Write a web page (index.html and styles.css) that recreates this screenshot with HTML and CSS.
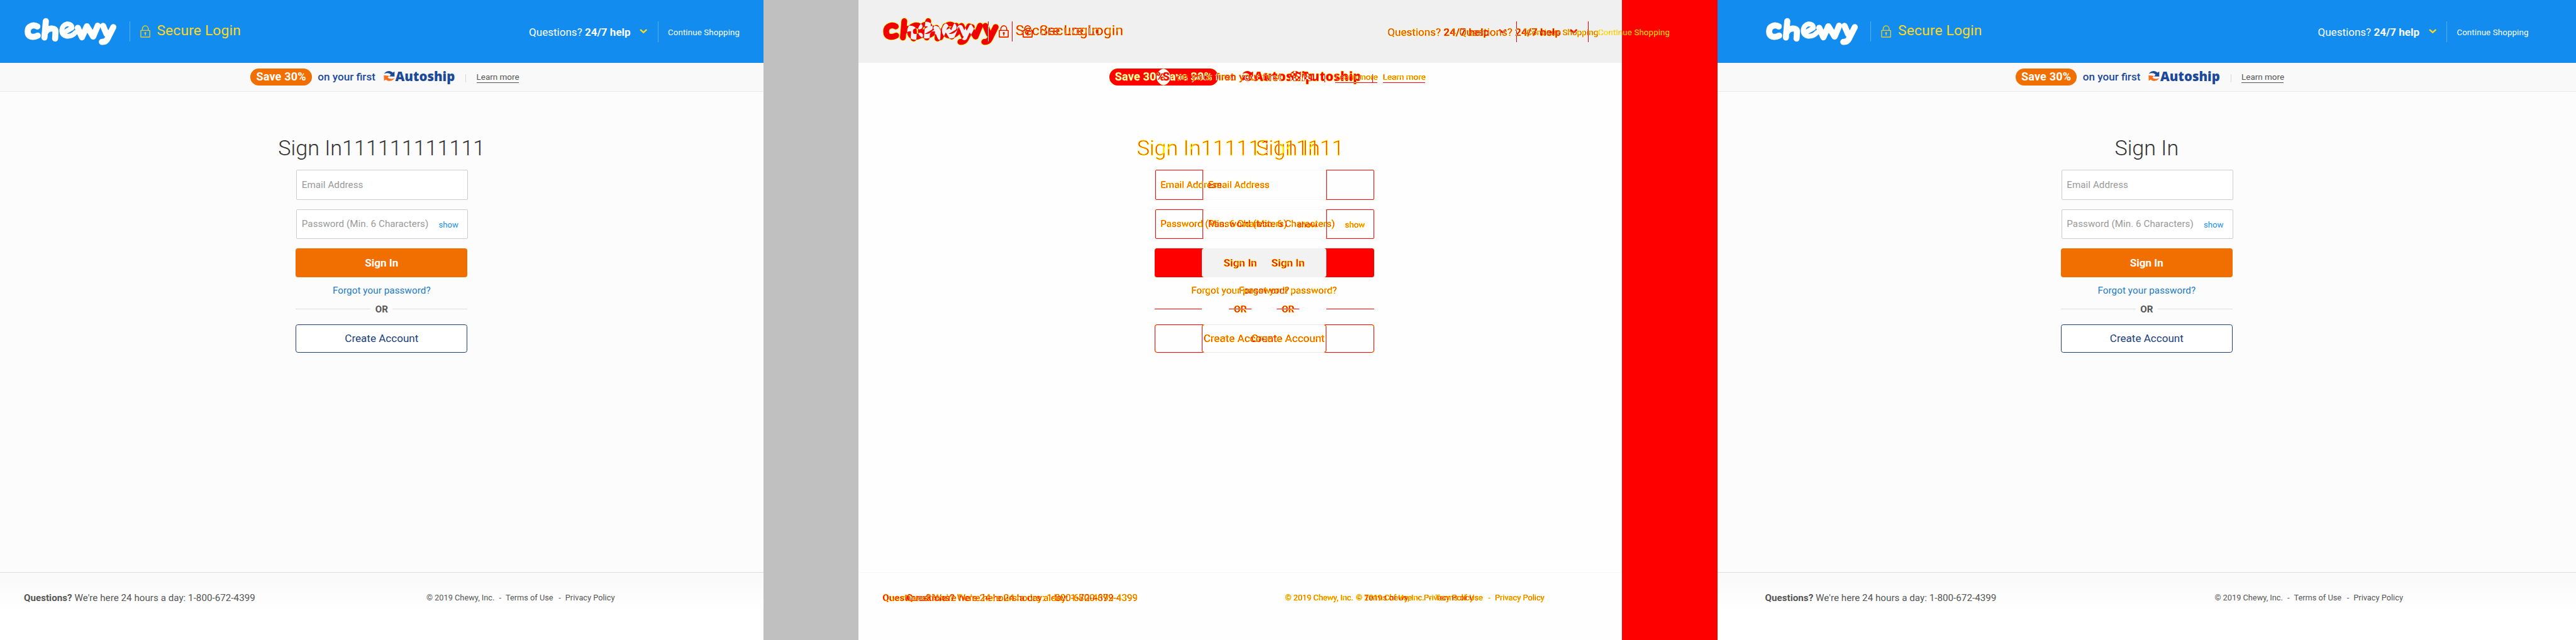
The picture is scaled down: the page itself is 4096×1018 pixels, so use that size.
FILE: index.html
```html
<!DOCTYPE html>
<html lang="en">
<head>
<meta charset="utf-8">
<title>Sign In</title>
<link rel="stylesheet" href="styles.css">
</head>
<body>
<svg class="defs" width="0" height="0" aria-hidden="true">
  <filter id="two-tone" x="0" y="0" width="100%" height="100%" color-interpolation-filters="sRGB">
    <feColorMatrix values="1 0 0 0 0  0 1 0 0 0  0 1 1 0 -1  0 0 0 1 0"/>
  </filter>
  <symbol id="logo" viewBox="28 28 469 142">
    <g fill="none" stroke-linecap="round" stroke-linejoin="round">
      <path d="M95 73C78 62 46 68 46 98C46 128 72 131 97 119"/>
      <path d="M138 46L131 129M135 104C146 78 188 76 187 99L185 134"/>
      <path class="thin" d="M230 104L271 80C268 50 222 54 219 92C217 128 262 132 288 104"/>
      <path d="M300 80L321 128L346 72L378 124L401 69"/>
      <path d="M428 70L446 112M480 76L450 136C443 150 434 152 422 151"/>
    </g>
  </symbol>
  <symbol id="lock" viewBox="0 0 17 21">
    <rect x="1" y="8.8" width="15" height="11.2" rx=".5" fill="none" stroke="currentColor" stroke-width="1.5"/>
    <path d="M3.6 8.8V6a4.9 4.9 0 0 1 9.8 0v2.8M8.5 13.5v4" fill="none" stroke="currentColor" stroke-width="1.5"/>
    <circle cx="8.5" cy="13.3" r="1.6" fill="currentColor"/>
  </symbol>
  <symbol id="arrows" viewBox="69 28 56 50">
    <path class="arrow-a" d="M71 42C82 25 104 24 114 36L123 30V55L97 54L105 46C96 36 84 36 71 42Z"/>
    <path class="arrow-b" d="M123 63C112 80 90 81 81 70L71 76L70 49L97 52L89 60C98 69 110 68 123 63Z"/>
  </symbol>
  <symbol id="chevron" viewBox="0 0 13 8">
    <path d="M1.8 1.8L6.5 6L11.2 1.8" fill="none" stroke="currentColor" stroke-width="2.6" stroke-linecap="round"/>
  </symbol>
</svg>
<div class="board">
  <section class="panel narrow">
    <header class="top">
      <svg class="logo"><use href="#logo"/></svg><i class="rule"></i>
      <svg class="lock"><use href="#lock"/></svg><span class="secure">Secure Login</span>
      <div class="help"><span class="ask">Questions? <b>24/7 help</b></span><svg class="chevron"><use href="#chevron"/></svg><i class="rule"></i><span class="shop">Continue Shopping</span></div>
    </header>
    <div class="promo">
      <b class="pill">Save 30%</b><span class="first">on your first</span><svg class="arrows"><use href="#arrows"/></svg><b class="auto">Autoship</b><i class="tick"></i><span class="learn">Learn more</span>
    </div>
    <main class="main">
      <h1>Sign In111111111111</h1>
      <form class="form">
        <div class="field"><span class="hint">Email Address</span></div>
        <div class="field"><span class="hint">Password (Min. 6 Characters)</span><span class="show">show</span></div>
        <div class="signin"><span>Sign In</span></div>
        <a class="forgot">Forgot your password?</a>
        <div class="or"><span>OR</span></div>
        <div class="create"><span>Create Account</span></div>
      </form>
    </main>
    <footer class="foot">
      <span class="call"><b>Questions?</b> We're here 24 hours a day: 1-800-672-4399</span>
      <div class="legal"><span class="copy">© 2019 Chewy, Inc.</span><span class="dash">-</span><span class="terms">Terms of Use</span><span class="dash">-</span><span class="privacy">Privacy Policy</span></div>
    </footer>
  </section>
  <div class="gap"></div>
  <section class="compare">
    <div class="layers">
      <div class="panel narrow mark">
        <div class="top">
          <svg class="logo"><use class="edge" href="#logo"/><use href="#logo"/></svg><i class="rule"></i>
          <svg class="lock"><use href="#lock"/></svg><span class="secure">Secure Login</span>
          <div class="help"><span class="ask">Questions? <b>24/7 help</b></span><svg class="chevron"><use href="#chevron"/></svg><i class="rule"></i><span class="shop">Continue Shopping</span></div>
        </div>
        <div class="promo">
          <b class="pill">Save 30%</b><span class="first">on your first</span><svg class="arrows"><use href="#arrows"/></svg><b class="auto">Autoship</b><i class="tick"></i><span class="learn">Learn more</span>
        </div>
        <div class="main">
          <h2>Sign In111111111111</h2>
          <div class="form">
            <div class="field"><span class="hint">Email Address</span></div>
            <div class="field"><span class="hint">Password (Min. 6 Characters)</span><span class="show">show</span></div>
            <div class="signin"><span>Sign In</span></div>
            <a class="forgot">Forgot your password?</a>
            <div class="or"><span>OR</span></div>
            <div class="create"><span>Create Account</span></div>
          </div>
        </div>
        <div class="foot">
          <span class="call"><b>Questions?</b> We're here 24 hours a day: 1-800-672-4399</span>
          <div class="legal"><span class="copy">© 2019 Chewy, Inc.</span><span class="dash">-</span><span class="terms">Terms of Use</span><span class="dash">-</span><span class="privacy">Privacy Policy</span></div>
        </div>
      </div>
      <div class="panel wide mark">
        <div class="top">
          <svg class="logo"><use class="edge" href="#logo"/><use href="#logo"/></svg><i class="rule"></i>
          <svg class="lock"><use href="#lock"/></svg><span class="secure">Secure Login</span>
          <div class="help"><span class="ask">Questions? <b>24/7 help</b></span><svg class="chevron"><use href="#chevron"/></svg><i class="rule"></i><span class="shop"></span></div>
        </div>
        <div class="promo">
          <b class="pill">Save 30%</b><span class="first">on your first</span><svg class="arrows"><use href="#arrows"/></svg><b class="auto">Autoship</b><i class="tick"></i><span class="learn">Learn more</span>
        </div>
        <div class="main">
          <h2>Sign In</h2>
          <div class="form">
            <div class="field"><span class="hint">Email Address</span></div>
            <div class="field"><span class="hint">Password (Min. 6 Characters)</span><span class="show">show</span></div>
            <div class="signin"><span>Sign In</span></div>
            <a class="forgot">Forgot your password?</a>
            <div class="or"><span>OR</span></div>
            <div class="create"><span>Create Account</span></div>
          </div>
        </div>
        <div class="foot">
          <span class="call"><b>Questions?</b> We're here 24 hours a day: 1-800-672-4399</span>
          <div class="legal"><span class="copy">© 2019 Chewy, Inc.</span><span class="dash">-</span><span class="terms">Terms of Use</span><span class="dash">-</span><span class="privacy">Privacy Policy</span></div>
        </div>
      </div>
    </div>
    <div class="shade">
      <div class="panel base">
        <div class="top"></div>
        <div class="promo"></div>
        <div class="main">
          <div class="form">
            <div class="field"></div>
            <div class="field"></div>
            <div class="signin"></div>
            <div class="forgot"></div>
            <div class="or"></div>
            <div class="create"></div>
          </div>
        </div>
        <div class="foot"></div>
      </div>
      <div class="excess"></div>
    </div>
    <div class="top over"><div class="help"><span class="shop">Continue Shopping</span></div></div>
  </section>
  <section class="panel wide">
    <header class="top">
      <svg class="logo"><use href="#logo"/></svg><i class="rule"></i>
      <svg class="lock"><use href="#lock"/></svg><span class="secure">Secure Login</span>
      <div class="help"><span class="ask">Questions? <b>24/7 help</b></span><svg class="chevron"><use href="#chevron"/></svg><i class="rule"></i><span class="shop">Continue Shopping</span></div>
    </header>
    <div class="promo">
      <b class="pill">Save 30%</b><span class="first">on your first</span><svg class="arrows"><use href="#arrows"/></svg><b class="auto">Autoship</b><i class="tick"></i><span class="learn">Learn more</span>
    </div>
    <main class="main">
      <h1>Sign In</h1>
      <form class="form">
        <div class="field"><span class="hint">Email Address</span></div>
        <div class="field"><span class="hint">Password (Min. 6 Characters)</span><span class="show">show</span></div>
        <div class="signin"><span>Sign In</span></div>
        <a class="forgot">Forgot your password?</a>
        <div class="or"><span>OR</span></div>
        <div class="create"><span>Create Account</span></div>
      </form>
    </main>
    <footer class="foot">
      <span class="call"><b>Questions?</b> We're here 24 hours a day: 1-800-672-4399</span>
      <div class="legal"><span class="copy">© 2019 Chewy, Inc.</span><span class="dash">-</span><span class="terms">Terms of Use</span><span class="dash">-</span><span class="privacy">Privacy Policy</span></div>
    </footer>
  </section>
</div>
</body>
</html>
```
FILE: styles.css
```css
/* 1rem is ten design pixels of a 4320px wide board */
html { font-size: 9.48148px; }
* { box-sizing: border-box; }
body { margin: 0; overflow: hidden; background: #c0c0c0; font-family: Roboto, "Liberation Sans", sans-serif; }
.defs { position: absolute; }
.board { display: flex; width: 432rem; height: 1018px; font-size: 1.6rem; white-space: nowrap; }
.board svg { display: block; flex: none; }
.board i, .board span, .board b { flex: none; }

.panel { display: flex; flex-direction: column; flex: none; height: 1018px; background: #fcfcfc; color: #555; }
.narrow { width: 128rem; --pad: 4rem; --call: 67.5rem; }
.wide { width: 144rem; --pad: 8rem; --call: 75.4rem; }
.gap { width: 16rem; flex: none; background: #c0c0c0; }

/* header */
.top { display: flex; align-items: center; height: 10.5rem; flex: none; padding: 0 var(--pad); background: #128cee; color: #fff; }
.logo { width: 15.6rem; height: 4.7rem; margin-top: .1rem; stroke: #fff; stroke-width: 31; --thin: 25; }
.thin { stroke-width: var(--thin); }
.top .rule { width: 1px; height: 3.4rem; margin: 0 1.7rem 0 2.1rem; background: #59aff3; }
.lock { width: 1.7rem; height: 2.1rem; margin-right: 1.1rem; color: #e3cc2c; }
.secure { font-size: 2.4rem; letter-spacing: .02rem; color: #ffd81c; line-height: 3rem; margin-top: -.1rem; }
.help { display: flex; align-items: center; margin-left: auto; height: 3.5rem; margin-top: .2rem; }
.ask { width: 17.3rem; font-size: 1.8rem; }
.chevron { width: 1.3rem; height: .8rem; margin-left: 1.3rem; margin-top: -.2rem; color: #ffd81c; }
.help .rule { height: 3.5rem; margin: 0 1.6rem 0 1.7rem; }
.shop { width: 12rem; font-size: 1.4rem; letter-spacing: .015rem; margin-top: .2rem; }

/* promotion strip */
.promo { display: flex; align-items: center; justify-content: center; height: 4.9rem; flex: none; padding-left: 1rem; background: #f9f9f9; border-bottom: 1px solid #e9e9e9; }
.pill { display: flex; justify-content: center; width: 10.3rem; height: 2.8rem; line-height: 2.8rem; border-radius: 1.4rem; background: #f16e00; color: #fff; font-size: 1.9rem; letter-spacing: .02rem; }
.first { width: 9.7rem; margin-left: 1rem; font-size: 1.8rem; font-weight: 500; color: #1c4a99; }
.arrows { width: 1.9rem; height: 1.7rem; margin: -.3rem .1rem 0 1.3rem; }
.arrow-a { fill: var(--arrow-a, #1c4a99); }
.arrow-b { fill: var(--arrow-b, #f66f1e); }
.auto { width: 9.9rem; font-family: "Open Sans", sans-serif; font-weight: 800; font-size: 2.15rem; line-height: 2.4rem; margin-top: -.2rem; color: #1c4a99; }
.tick { width: 1px; height: 1.4rem; margin: .4rem 1.7rem 0 1.9rem; background: #d8d8d8; }
.learn { width: 7.1rem; height: 1.8rem; margin-top: .2rem; font-size: 1.42rem; line-height: 1.6rem; border-bottom: 1px solid #555; }

/* sign-in form */
.main { display: flex; flex-direction: column; align-items: center; flex: 1; padding-top: 7rem; }
.main h1, .main h2 { margin: 0 0 1.1rem; height: 5rem; line-height: 5rem; font-size: 3.6rem; font-weight: 300; color: #333; }
.form { display: flex; flex-direction: column; width: 28.8rem; }
.field { display: flex; align-items: center; justify-content: space-between; height: 5rem; padding: 0 1.5rem 0 .8rem; margin: 0 -.1rem 1.6rem .1rem; border: 1px solid #ccc; border-radius: .2rem; background: #fff; color: #999; }
.hint { letter-spacing: .006rem; }
.show { font-size: 1.4rem; color: #1c90ee; margin-top: .3rem; }
.signin, .create { display: flex; align-items: center; justify-content: center; height: 4.8rem; border-radius: .4rem; font-size: 1.8rem; }
.signin { background: #f16e00; color: #fff; font-weight: 700; }
.forgot { height: 2.4rem; line-height: 2.4rem; margin: 1.1rem 0 .9rem; text-align: center; letter-spacing: .01rem; color: #1a79c8; }
.or { display: flex; align-items: center; gap: .8rem; height: 2rem; margin-bottom: 1.5rem; font-weight: 700; color: #555; }
.or::before, .or::after { content: ""; flex: 1; height: 1px; background: var(--line, #ddd); }
.create { background: #fff; border: 1px solid #1c3f7c; color: #1c3f7c; }

/* footer */
.foot { display: flex; align-items: center; height: 11.4rem; flex: none; padding: 0 0 2.9rem var(--pad); border-top: 1px solid #ddd; background: linear-gradient(#f9f9f9, #fff 60%); }
.call { width: var(--call); letter-spacing: .003rem; }
.legal { display: flex; gap: .9rem; font-size: 1.35rem; }
.dash { width: .5rem; margin: 0 -.3rem 0 .3rem; }
.copy { width: 11rem; }
.terms { width: 7.7rem; }

/* overlay comparison: the layers are subtracted, so equal areas cancel out */
.compare { position: relative; width: 144rem; height: 1018px; flex: none; isolation: isolate; background: #fff; }
.layers { position: absolute; inset: 0; background: #fff; isolation: isolate; filter: url(#two-tone); }
.mark { position: absolute; left: 0; top: 0; mix-blend-mode: difference; background: #000; color: #0ff; -webkit-text-stroke: .4px #00f; --line: #0ff; --arrow-a: #0ff; --arrow-b: #0ff; }
.mark .top, .mark .promo, .mark .foot { background: none; border-color: transparent; }
.mark span, .mark .forgot, .mark .lock, .mark .chevron, .mark .auto, .mark .or, .mark h2 { color: #0ff; }
.mark .logo { stroke: #0ff; stroke-width: 29; --thin: 23; }
.mark .edge { stroke: #00f; stroke-width: 34; --thin: 28; }
.mark .rule, .mark .tick { background: #0ff; }
.mark .field, .mark .create { background: none; border-color: #0ff; }
.mark .pill { background: #0ff; color: #000; }
.mark .signin { background: #0ff; }
.mark .signin span { color: #000; -webkit-text-stroke: .5px #0f0; }
.mark .learn { border-color: #0ff; }
.mark h2 { -webkit-text-stroke: .9px #00f; }

.shade { position: absolute; inset: 0; display: flex; mix-blend-mode: multiply; }
.excess { width: 16rem; background: #f00; }
.base { width: 128rem; background: #fefefe; }
.base .top { background: #f0f0f0; }
.base .promo { background: none; border-color: transparent; }
.base .main { width: 136rem; padding-top: 13.1rem; }
.base .form { width: 20.8rem; }
.base .field, .base .create { border-color: #f6f6f6; border-width: 1px 0; border-radius: 0; background: none; }
.base .create { border-color: #e8e8e8; }
.base .signin { background: #f2f2f2; border-radius: 0; }
.base .or { visibility: hidden; }
.base .foot { background: none; border-color: #f6f6f6; }

.over { position: absolute; left: 0; top: 0; width: 144rem; padding: 0 8rem; background: none; color: #ff0; }
.over .shop { -webkit-text-stroke: .2px #f60; }
```
